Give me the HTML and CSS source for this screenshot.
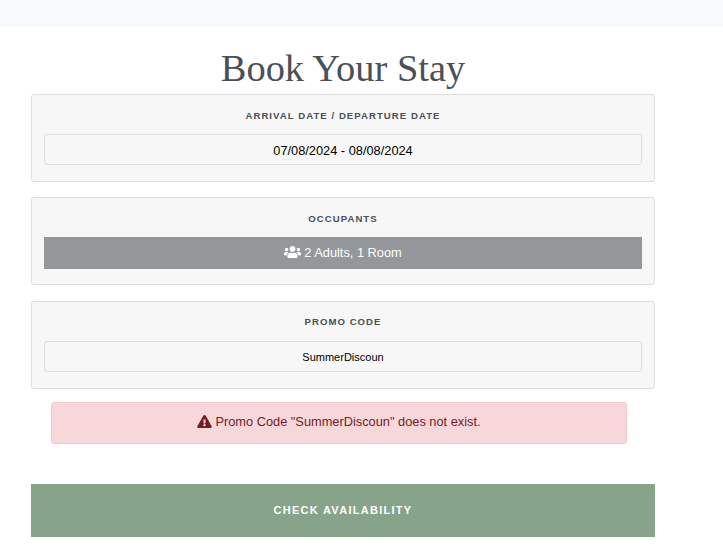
FILE: index.html
```html
<!DOCTYPE html>
<html lang="en">
<head>
<meta charset="utf-8">
<title>Book Your Stay</title>
<link rel="stylesheet" href="styles.css">
</head>
<body>
<div class="topbar"></div>
<main class="booking">
  <h1 class="title">Book Your Stay</h1>
  <section class="card card-dates">
    <label class="card-label">ARRIVAL DATE / DEPARTURE DATE</label>
    <div class="field field-date">07/08/2024 - 08/08/2024</div>
  </section>
  <section class="card card-occupants">
    <label class="card-label">OCCUPANTS</label>
    <button class="occupants" type="button">
      <svg class="icon-users" viewBox="0 0 640 512" aria-hidden="true"><path d="M96 224c35.3 0 64-28.7 64-64s-28.7-64-64-64-64 28.7-64 64 28.7 64 64 64zm448 0c35.3 0 64-28.7 64-64s-28.7-64-64-64-64 28.7-64 64 28.7 64 64 64zm32 32h-64c-17.6 0-33.5 7.1-45.1 18.6 40.3 22.1 68.9 62 75.1 109.4h66c17.7 0 32-14.3 32-32v-32c0-35.3-28.7-64-64-64zm-256 0c61.9 0 112-50.1 112-112S381.9 32 320 32 208 82.1 208 144s50.1 112 112 112zm76.8 32h-8.3c-20.8 10-43.9 16-68.5 16s-47.6-6-68.5-16h-8.3C179.6 288 128 339.6 128 403.2V432c0 26.5 21.5 48 48 48h288c26.5 0 48-21.5 48-48v-28.8c0-63.6-51.6-115.2-115.2-115.2zm-223.7-13.4C161.5 263.1 145.6 256 128 256H64c-35.3 0-64 28.7-64 64v32c0 17.7 14.3 32 32 32h65.9c6.3-47.4 34.9-87.3 75.2-109.4z"/></svg>
      <span>2 Adults, 1 Room</span>
    </button>
  </section>
  <section class="card card-promo">
    <label class="card-label card-label-promo">PROMO CODE</label>
    <div class="field field-promo">SummerDiscoun</div>
  </section>
  <div class="alert">
    <svg class="icon-warn" viewBox="0 0 576 512" aria-hidden="true"><path d="M569.517 440.013C587.975 472.007 564.806 512 527.94 512H48.054c-36.937 0-59.999-40.055-41.577-71.987L246.423 23.985c18.467-32.009 64.72-31.951 83.154 0l239.94 416.028zM288 354c-25.405 0-46 20.595-46 46s20.595 46 46 46 46-20.595 46-46-20.595-46-46-46zm-43.673-165.346l7.418 136c.347 6.364 5.609 11.346 11.982 11.346h48.546c6.373 0 11.635-4.982 11.982-11.346l7.418-136c.375-6.874-5.098-12.654-11.982-12.654h-63.383c-6.884 0-12.356 5.78-11.981 12.654z"/></svg>
    <span>Promo Code "SummerDiscoun" does not exist.</span>
  </div>
  <button class="submit" type="button">CHECK AVAILABILITY</button>
</main>
</body>
</html>
```

FILE: styles.css
```css
* {
  box-sizing: border-box;
}

body {
  margin: 0;
  background: #fff;
  font-family: "Liberation Sans", Arial, sans-serif;
  color: #212529;
}

.topbar {
  height: 27px;
  background: #f8f9fa;
}

.booking {
  width: 624px;
  margin-left: 31px;
  display: flex;
  flex-direction: column;
}

.title {
  margin: 17px 0 0;
  height: 50px;
  font-family: "Liberation Serif", "Times New Roman", serif;
  font-size: 38.4px;
  font-weight: 400;
  line-height: 48px;
  text-align: center;
  color: #495057;
}

.card {
  height: 88px;
  padding: 12px 12px 0;
  background: #f7f7f7;
  border: 1px solid #dedede;
  border-radius: 3px;
  display: flex;
  flex-direction: column;
}

.card-occupants {
  margin-top: 15px;
}

.card-promo {
  margin-top: 16px;
}

.card-label {
  height: 27px;
  font-size: 9.6px;
  font-weight: 700;
  line-height: 18px;
  letter-spacing: 1.04px;
  text-align: center;
  color: #495057;
}

.card-label-promo {
  line-height: 16px;
}

.field {
  height: 31px;
  background: #f7f7f7;
  border: 1px solid #dedede;
  border-radius: 3px;
  display: flex;
  align-items: center;
  justify-content: center;
  color: #000;
}

.field-date {
  font-size: 12.8px;
  padding-top: 1px;
}

.field-promo {
  font-size: 11px;
}

.occupants {
  height: 32px;
  padding: 0 0 2px;
  border: 0;
  background: #95989b;
  color: #fff;
  font-family: inherit;
  font-size: 12.8px;
  display: flex;
  align-items: center;
  justify-content: center;
  gap: 3px;
}

.icon-users {
  width: 17px;
  height: 14px;
  fill: #fff;
}

.alert {
  width: 576px;
  height: 42px;
  margin: 13px 0 0 20px;
  background: #f8d7da;
  border: 1px solid #f5c6cb;
  border-radius: 3px;
  color: #721c24;
  font-size: 12.8px;
  display: flex;
  align-items: center;
  justify-content: center;
  gap: 3px;
  padding-bottom: 3px;
}

.icon-warn {
  width: 15px;
  height: 13px;
  fill: #721c24;
}

.submit {
  height: 53px;
  margin-top: 40px;
  padding: 0 0 2px;
  border: 0;
  background: #87a48a;
  color: #fff;
  font-family: inherit;
  font-size: 11px;
  font-weight: 700;
  letter-spacing: 1.28px;
}
```
